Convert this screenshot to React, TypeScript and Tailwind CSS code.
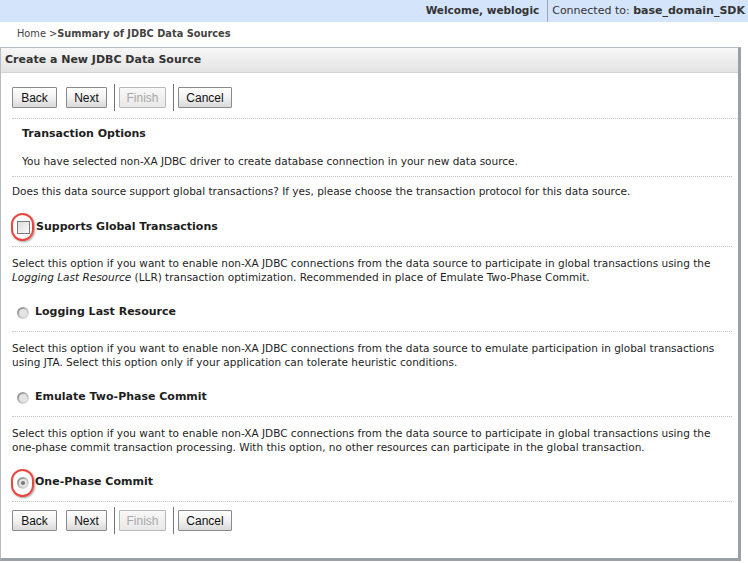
import * as React from "react"

const font = "font-['DejaVu_Sans',Verdana,sans-serif]"
const btnFont = "font-['Liberation_Sans',Arial,sans-serif]"

function Btn({ label, disabled, w }: { label: string; disabled?: boolean; w: string }) {
  return (
    <div
      className={`${btnFont} h-[21px] ${w} flex items-center justify-center text-[12px] border rounded-[1px] ${
        disabled
          ? "border-[#b8b8b8] text-[#a8a8a8] bg-gradient-to-b from-[#f8f8f8] to-[#e8e8e8]"
          : "border-[#8a8a8a] text-[#111] bg-gradient-to-b from-[#ffffff] via-[#f2f2f2] to-[#d9d9d9]"
      }`}
    >
      {label}
    </div>
  )
}

function ButtonBar() {
  return (
    <div className="flex items-center h-[21px]">
      <Btn label="Back" w="w-[45px]" />
      <div className="w-[9px]" />
      <Btn label="Next" w="w-[41px]" />
      <div className="w-[8px] h-[27px] border-r border-[#777] mr-[4px]" />
      <Btn label="Finish" disabled w="w-[47px]" />
      <div className="w-[8px] h-[27px] border-r border-[#777] mr-[4px]" />
      <Btn label="Cancel" w="w-[54px]" />
    </div>
  )
}

function Dots({ right = "mr-[6px]" }: { right?: string }) {
  return <div className={`border-t border-dotted border-[#c4c4c4] ${right}`} />
}

function Radio({ checked }: { checked?: boolean }) {
  return (
    <div className="w-[12px] h-[12px] rounded-full bg-gradient-to-br from-[#777] via-[#bdbdbd] to-[#efefef] flex items-center justify-center">
      <div className="w-[8px] h-[8px] rounded-full bg-[#e4e4e4] flex items-center justify-center">
        {checked && <div className="w-[4px] h-[4px] rounded-full bg-[#777]" />}
      </div>
    </div>
  )
}

function Ring() {
  return (
    <div className="absolute left-[-6px] top-[-8px] w-[23px] h-[28px] rounded-full border-2 border-[#e8463e] shadow-[1px_1px_2px_rgba(0,0,0,0.35)]" />
  )
}

function Section({ lines, label, checked, ring }: { lines: React.ReactNode[]; label: string; checked?: boolean; ring?: boolean }) {
  return (
    <div>
      <Dots />
      <div className="pt-[9px] leading-[14px]">
        {lines.map((l, i) => (
          <div key={i}>{l}</div>
        ))}
      </div>
      <div className="h-[47px] pt-[10px] flex items-center">
        <div className="relative ml-[5px] mr-[6px]">
          <Radio checked={checked} />
          {ring && <Ring />}
        </div>
        <span className="font-bold text-[11px]">{label}</span>
      </div>
    </div>
  )
}

export default function App() {
  return (
    <div className={`${font} w-[748px] h-[563px] bg-white text-[10.5px] text-[#1e1e1e] overflow-hidden`}>
      <div className="h-[22px] bg-[#d4e4fa] flex justify-end items-center text-[#333]">
        <span className="font-bold text-[10.5px] pr-[8px]">Welcome, weblogic</span>
        <div className="border-l border-[#9aa6b4] h-[22px]" />
        <span className="pl-[4px] pr-[3px] text-[11px]">
          Connected to: <span className="font-bold">base_domain_SDK</span>
        </span>
      </div>

      <div className="h-[25px] flex items-center pl-[17px] text-[9.8px] text-[#444]">
        Home &gt;<span className="font-bold">Summary of JDBC Data Sources</span>
      </div>

      <div className="w-[741px] h-[514px] border border-[#b4bcc6] border-r-[3px] border-r-[#9aa0a6] border-b-[3px] border-b-[#9aa0a6]">
        <div className="h-[25px] bg-gradient-to-b from-[#f7f7f7] to-[#e3e3e3] border-b border-[#d4d4d4] flex items-center pl-[4px] font-bold text-[11px] text-[#333]">
          Create a New JDBC Data Source
        </div>

        <div className="pl-[11px]">
          <div className="pt-[14px]">
            <ButtonBar />
          </div>
          <div className="mt-[10px]">
            <Dots right="mr-0" />
          </div>
          <div className="pl-[10px] pt-[1px]">
            <div className="h-[28px] flex items-center font-bold text-[11px]">Transaction Options</div>
            <div className="h-[28px] flex items-center">
              You have selected non-XA JDBC driver to create database connection in your new data source.
            </div>
          </div>
          <Dots />
          <div className="h-[28px] pt-[1px] flex items-center">
            Does this data source support global transactions? If yes, please choose the transaction protocol for this data source.
          </div>
          <div className="h-[41px] pt-[3px] flex items-center">
            <div className="relative ml-[5px] mr-[6px]">
              <div className="w-[13px] h-[13px] border border-[#7a7a7a] bg-gradient-to-br from-[#dcdcdc] to-[#fafafa]" />
              <Ring />
            </div>
            <span className="font-bold text-[11px]">Supports Global Transactions</span>
          </div>

          <Section
            lines={[
              "Select this option if you want to enable non-XA JDBC connections from the data source to participate in global transactions using the",
              <>
                <i>Logging Last Resource</i> (LLR) transaction optimization. Recommended in place of Emulate Two-Phase Commit.
              </>,
            ]}
            label="Logging Last Resource"
          />
          <Section
            lines={[
              "Select this option if you want to enable non-XA JDBC connections from the data source to emulate participation in global transactions",
              "using JTA. Select this option only if your application can tolerate heuristic conditions.",
            ]}
            label="Emulate Two-Phase Commit"
          />
          <Section
            lines={[
              "Select this option if you want to enable non-XA JDBC connections from the data source to participate in global transactions using the",
              "one-phase commit transaction processing. With this option, no other resources can participate in the global transaction.",
            ]}
            label="One-Phase Commit"
            checked
            ring
          />
          <Dots />
          <div className="pt-[8px]">
            <ButtonBar />
          </div>
        </div>
      </div>
    </div>
  )
}
